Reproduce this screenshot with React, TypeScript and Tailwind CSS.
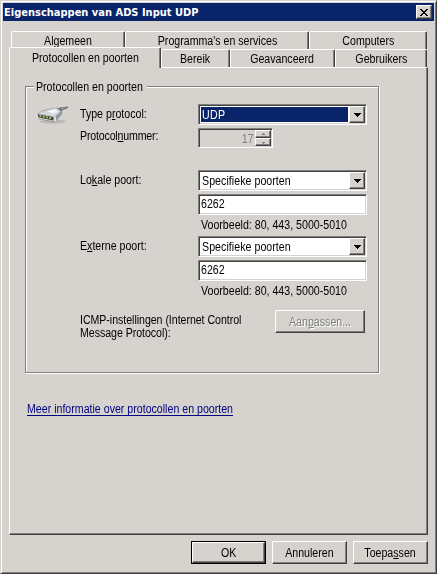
import React from "react";

type TextProps = { children: React.ReactNode; className?: string; from?: string };

/* Narrow dialog lettering, close to the classic 8pt bitmap font. */
function T({ children, className = "", from = "origin-left" }: TextProps) {
  return (
    <span className={`block scale-x-[0.885] whitespace-nowrap leading-[14px] ${from} ${className}`}>
      {children}
    </span>
  );
}

function U({ children }: { children: React.ReactNode }) {
  return <span className="underline decoration-1 underline-offset-[1px]">{children}</span>;
}

function Tab({ children, className = "" }: TextProps) {
  return (
    <div
      className={`flex justify-center rounded-t-[2px] border-t border-l border-r border-t-white border-l-white border-r-[#404040] bg-[#d6d3ce] shadow-[inset_-1px_0_#808080] ${className}`}
    >
      <T from="origin-center">{children}</T>
    </div>
  );
}

const sunken =
  "border border-t-[#808080] border-l-[#808080] border-r-white border-b-white shadow-[inset_1px_1px_#404040,inset_-1px_-1px_#d6d3ce]";
const raised =
  "border border-t-white border-l-white border-r-[#404040] border-b-[#404040] shadow-[inset_-1px_-1px_#808080] bg-[#d6d3ce]";

function Combo({ value, selected = false }: { value: string; selected?: boolean }) {
  return (
    <div className={`flex h-[21px] w-[169px] bg-white p-px ${sunken}`}>
      <div className={`m-px flex-1 pt-px pl-[1px] ${selected ? "bg-[#0a246a] text-white" : ""}`}>
        <T className={selected ? "tracking-[0.4px]" : "tracking-[0.05px]"}>{value}</T>
      </div>
      <div className={`flex w-4 items-center justify-center ${raised}`}>
        <svg width="7" height="4" viewBox="0 0 7 4" shapeRendering="crispEdges">
          <path d="M0 0h7v1H6v1H5v1H4v1H3V3H2V2H1V1H0z" fill="#000" />
        </svg>
      </div>
    </div>
  );
}

function Edit({ value }: { value: string }) {
  return (
    <div className={`h-[21px] w-[169px] bg-white pt-[2px] pl-[2px] ${sunken}`}>
      <T>{value}</T>
    </div>
  );
}

function SpinButton({ up = false }: { up?: boolean }) {
  return (
    <div className={`flex h-[8px] w-4 items-center justify-center ${raised}`}>
      <svg width="5" height="3" viewBox="0 0 5 3" shapeRendering="crispEdges">
        <path d={up ? "M2 0h1v1h1v1H1V1h1z" : "M1 1h3v1H3v1H2V2H1z"} fill="#808080" />
      </svg>
    </div>
  );
}

function Button({ children, isDefault = false }: { children: React.ReactNode; isDefault?: boolean }) {
  return (
    <div className={`h-[23px] w-[75px] ${isDefault ? "border border-black" : ""}`}>
      <div className={`flex h-full w-full items-center justify-center ${raised}`}>
        <T from="origin-center">{children}</T>
      </div>
    </div>
  );
}

function Connector() {
  return (
    <svg width="34" height="20" viewBox="0 0 34 20">
      <ellipse cx="17" cy="16.500" rx="13" ry="2.200" fill="#aaa8a4" opacity=".6" />
      <path d="M21 4.500l3-2 8-1v1.500l-5 2-3 2z" fill="#646b76" />
      <path d="M25 3.200l6-1.200-5 2.600z" fill="#a9b2bc" />
      <path d="M1 9l7-4 13-2.500 5 3.500v3l-6 7-3 1L2 14z" fill="#858c97" />
      <path d="M2 8.500l7-3L20 3l5 3.500-6 5z" fill="#d3d8de" />
      <path d="M11 6l8-1.700 3 2-5 2.400z" fill="#f2f4f6" />
      <path d="M19 11.500l6-5v3l-5.500 6.500z" fill="#949ba6" />
      <path d="M0 8.500l20 3v5L1 13.500z" fill="#d9dcdf" />
      <path d="M1.500 9.300l16 2.600v3.600l-15-3z" fill="#3f4138" />
      <path d="M3.500 11l13 2.500" stroke="#b5b86e" strokeWidth="1.800" strokeDasharray="2 1.300" />
    </svg>
  );
}

const row = "flex items-start";
const iconCol = "w-[54px] shrink-0";
const labelCol = "w-[118px] shrink-0";

function PortRows({ label }: { label: React.ReactNode }) {
  return (
    <div className="h-[66px]">
      <div className={`${row} h-6`}>
        <div className={iconCol} />
        <div className={`${labelCol} pt-[3px]`}>{label}</div>
        <Combo value="Specifieke poorten" />
      </div>
      <div className="pl-[172px]">
        <Edit value="6262" />
        <div className="pt-[3px] pl-[3px]">
          <T>Voorbeeld: 80, 443, 5000-5010</T>
        </div>
      </div>
    </div>
  );
}

export default function App() {
  return (
    <div className="h-[574px] w-[437px] overflow-hidden border border-t-[#d6d3ce] border-l-[#d6d3ce] border-r-[#404040] border-b-[#404040] bg-[#d6d3ce] font-['Liberation_Sans',Arial,sans-serif] text-[12px] text-black shadow-[inset_1px_1px_#fff,inset_-1px_-1px_#808080]">
      <div className="mt-[2px] ml-[2px] flex h-[18px] w-[431px] items-center justify-between bg-[#0a246a] pr-[2px] pl-[1px]">
        <span className="whitespace-nowrap pt-px font-['DejaVu_Sans_Condensed','DejaVu_Sans',sans-serif] text-[11px] font-bold leading-[14px] text-white">
          Eigenschappen van ADS Input UDP
        </span>
        <div className={`flex h-[14px] w-4 items-center justify-center ${raised}`}>
          <svg width="8" height="7" viewBox="0 0 8 7" shapeRendering="crispEdges">
            <path d="M0 0h2v1h1v1h2V1h1V0h2v1H7v1H6v1H5v1h1v1h1v1h1v1H6V6H5V5H3v1H2v1H0V6h1V5h1V4h1V3H2V2H1V1H0z" fill="#000" />
          </svg>
        </div>
      </div>

      <div className="mt-[10px] ml-[8px] w-[419px]">
        <div className="flex h-[18px] pl-[2px]">
          <Tab className="w-[114px] pt-[2px]">Algemeen</Tab>
          <Tab className="w-[184px] pt-[2px]">Programma's en services</Tab>
          <Tab className="w-[118px] pt-[2px]">Computers</Tab>
        </div>
        <div className="flex h-[18px]">
          <Tab className="relative z-10 -mt-[2px] h-[21px] w-[152px] pt-[3px]">Protocollen en poorten</Tab>
          <Tab className="w-[69px] pt-[2px]">Bereik</Tab>
          <Tab className="w-[105px] pt-[2px]">Geavanceerd</Tab>
          <Tab className="w-[92px] pt-[2px]">Gebruikers</Tab>
        </div>

        <div className="h-[468px] border border-t-white border-l-white border-r-[#404040] border-b-[#404040] pt-[18px] pl-[15px] shadow-[inset_-1px_-1px_#808080]">
          <div className="h-[287px] w-[354px] border border-[#808080] shadow-[inset_1px_1px_#fff,1px_1px_#fff]">
            <div className="-mt-[7px] ml-[8px] h-[14px] w-[113px] bg-[#d6d3ce] pl-[2px]">
              <T>Protocollen en poorten</T>
            </div>
            <div className="pt-[10px]">
              <div className={`${row} h-6`}>
                <div className={`${iconCol} pt-[1px] pl-[10px]`}><Connector /></div>
                <div className={`${labelCol} pt-[3px]`}><T>Type p<U>r</U>otocol:</T></div>
                <Combo value="UDP" selected />
              </div>
              <div className={`${row} h-[42px]`}>
                <div className={iconCol} />
                <div className={`${labelCol} pt-[1px]`}><T className="tracking-[-0.2px]">Protocol<U>n</U>ummer:</T></div>
                <div className={`flex h-[20px] w-[75px] justify-end p-px ${sunken}`}>
                  <T from="origin-right" className="pt-[2px] pr-[2px] text-[#808080]">17</T>
                  <div className="flex flex-col"><SpinButton up /><SpinButton /></div>
                </div>
              </div>
              <PortRows label={<T>Lo<U>k</U>ale poort:</T>} />
              <PortRows label={<T>E<U>x</U>terne poort:</T>} />
              <div className={`${row} pt-[8px]`}>
                <div className={iconCol} />
                <div className="w-[195px] shrink-0 pt-[4px]">
                  <T className="!leading-[13px] tracking-[-0.05px]">ICMP-instellingen (Internet Control<br />Message Protocol):</T>
                </div>
                <div className={`flex h-[23px] w-[90px] items-center justify-center ${raised}`}>
                  <T from="origin-center" className="text-[#808080] [text-shadow:1px_1px_#fff]">Aan<U>p</U>assen...</T>
                </div>
              </div>
            </div>
          </div>
          <div className="pt-[29px] pl-[2px]">
            <T className="text-[#000080] underline decoration-1 underline-offset-[2px]">Meer informatie over protocollen en poorten</T>
          </div>
        </div>
        <div className="flex justify-end gap-[6px] pt-[6px]">
          <Button isDefault>OK</Button>
          <Button>Annuleren</Button>
          <Button>Toepa<U>s</U>sen</Button>
        </div>
      </div>
    </div>
  );
}
